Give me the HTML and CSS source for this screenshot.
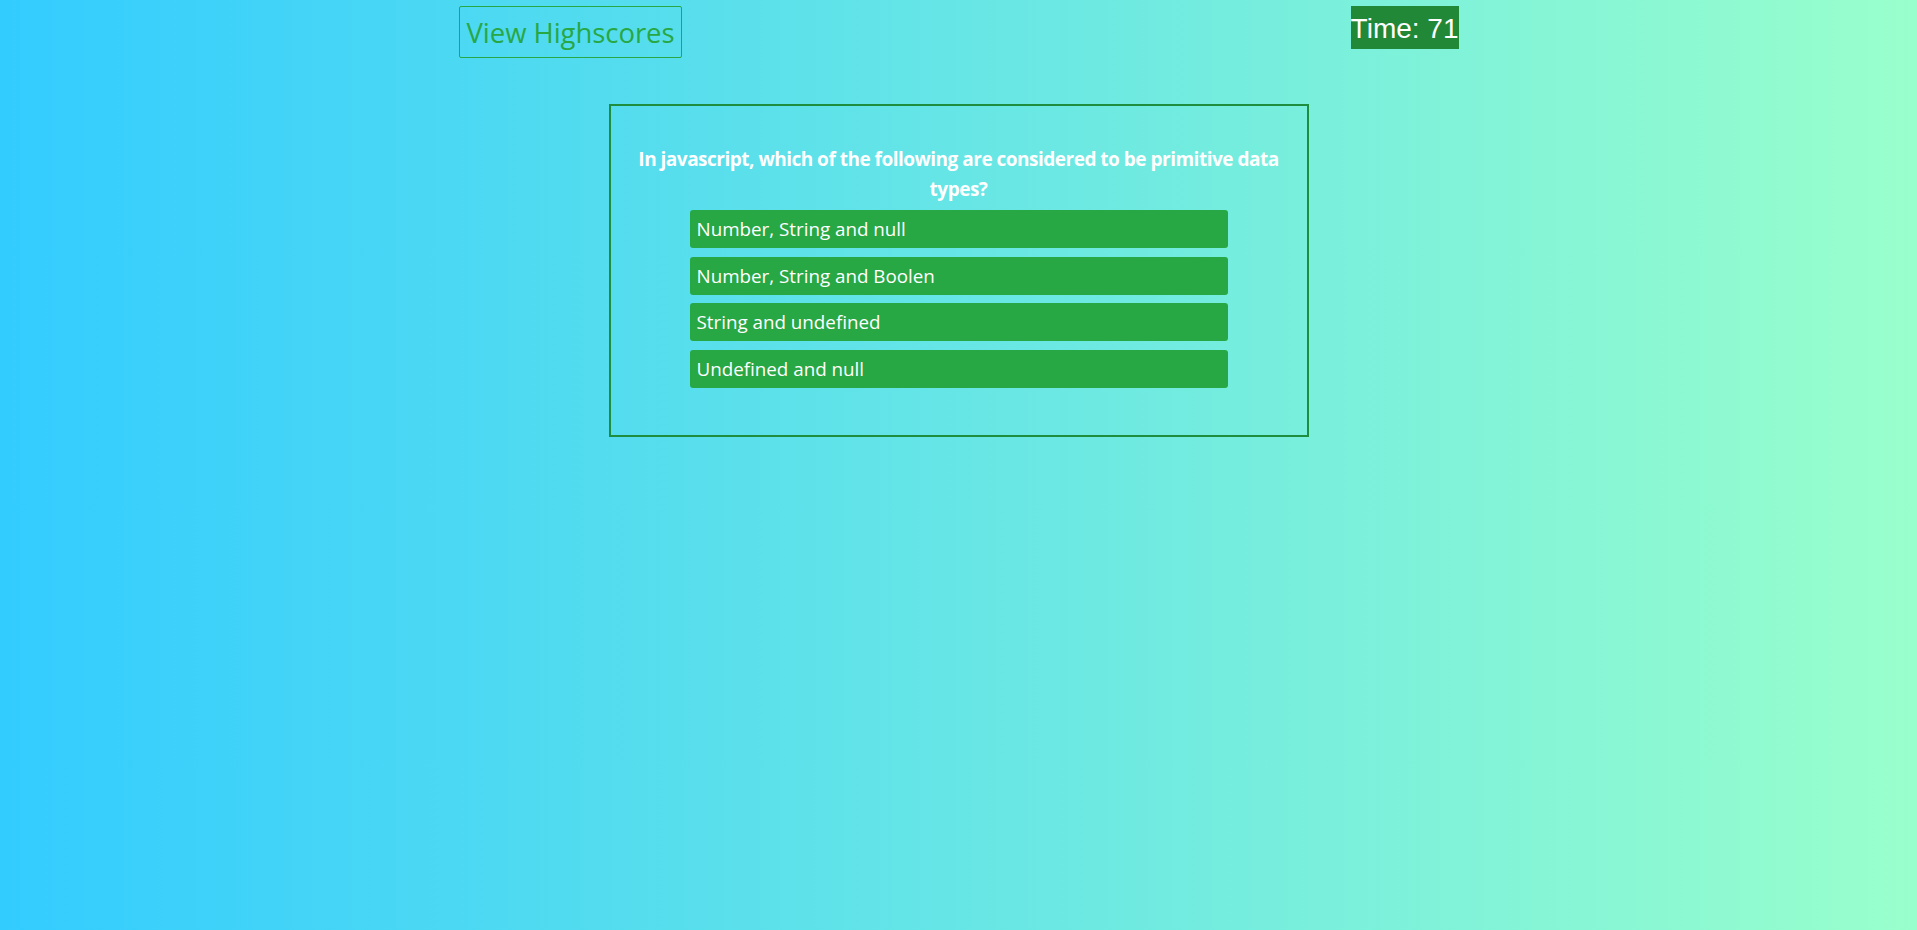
FILE: index.html
```html
<!DOCTYPE html>
<html lang="en">
<head>
<meta charset="utf-8">
<title>Code Quiz</title>
<link rel="stylesheet" href="styles.css">
</head>
<body>
  <header class="top-bar">
    <a class="highscores-link" href="#">View Highscores</a>
    <div class="timer">Time: 71</div>
  </header>
  <main class="quiz-card">
    <h2 class="question">In javascript, which of the following are considered to be primitive data types?</h2>
    <div class="answers">
      <button class="answer">Number, String and null</button>
      <button class="answer">Number, String and Boolen</button>
      <button class="answer">String and undefined</button>
      <button class="answer">Undefined and null</button>
    </div>
  </main>
</body>
</html>
```

FILE: styles.css
```css
html, body {
  margin: 0;
  padding: 0;
}

body {
  min-height: 100vh;
  background: linear-gradient(to right, #33ccff 0%, #99ffcc 100%);
  font-family: "Open Sans", "Noto Sans", sans-serif;
  color: #fff;
}

.top-bar {
  width: 1000px;
  margin: 0 auto;
  padding-top: 6px;
  display: flex;
  justify-content: space-between;
  align-items: flex-start;
}

.highscores-link {
  display: block;
  box-sizing: border-box;
  height: 52px;
  padding: 0 6px 0 7px;
  border: 1px solid #28a745;
  border-radius: 2px;
  color: #28a745;
  font-size: 27.4px;
  line-height: 51px;
  text-decoration: none;
}

.timer {
  background: #218838;
  color: #fff;
  font-family: "Liberation Sans", Arial, sans-serif;
  font-size: 28px;
  line-height: 45px;
  height: 43px;
  overflow: hidden;
}

.quiz-card {
  width: 700px;
  box-sizing: border-box;
  margin: 46px auto 0;
  border: 2px solid #1e8e3e;
  padding: 38px 8px 47px;
}

.question {
  margin: 0 0 6px;
  font-size: 19px;
  font-weight: 700;
  letter-spacing: -0.5px;
  line-height: 30px;
  text-align: center;
}

.answers {
  width: 538px;
  margin: 0 auto;
  display: flex;
  flex-direction: column;
  gap: 8.7px;
}

.answer {
  display: block;
  width: 100%;
  height: 38px;
  padding: 0 7px;
  border: none;
  border-radius: 3px;
  background: #28a745;
  color: #fff;
  font-family: "Open Sans", "Noto Sans", sans-serif;
  font-size: 18.8px;
  text-align: left;
  cursor: pointer;
}
```
